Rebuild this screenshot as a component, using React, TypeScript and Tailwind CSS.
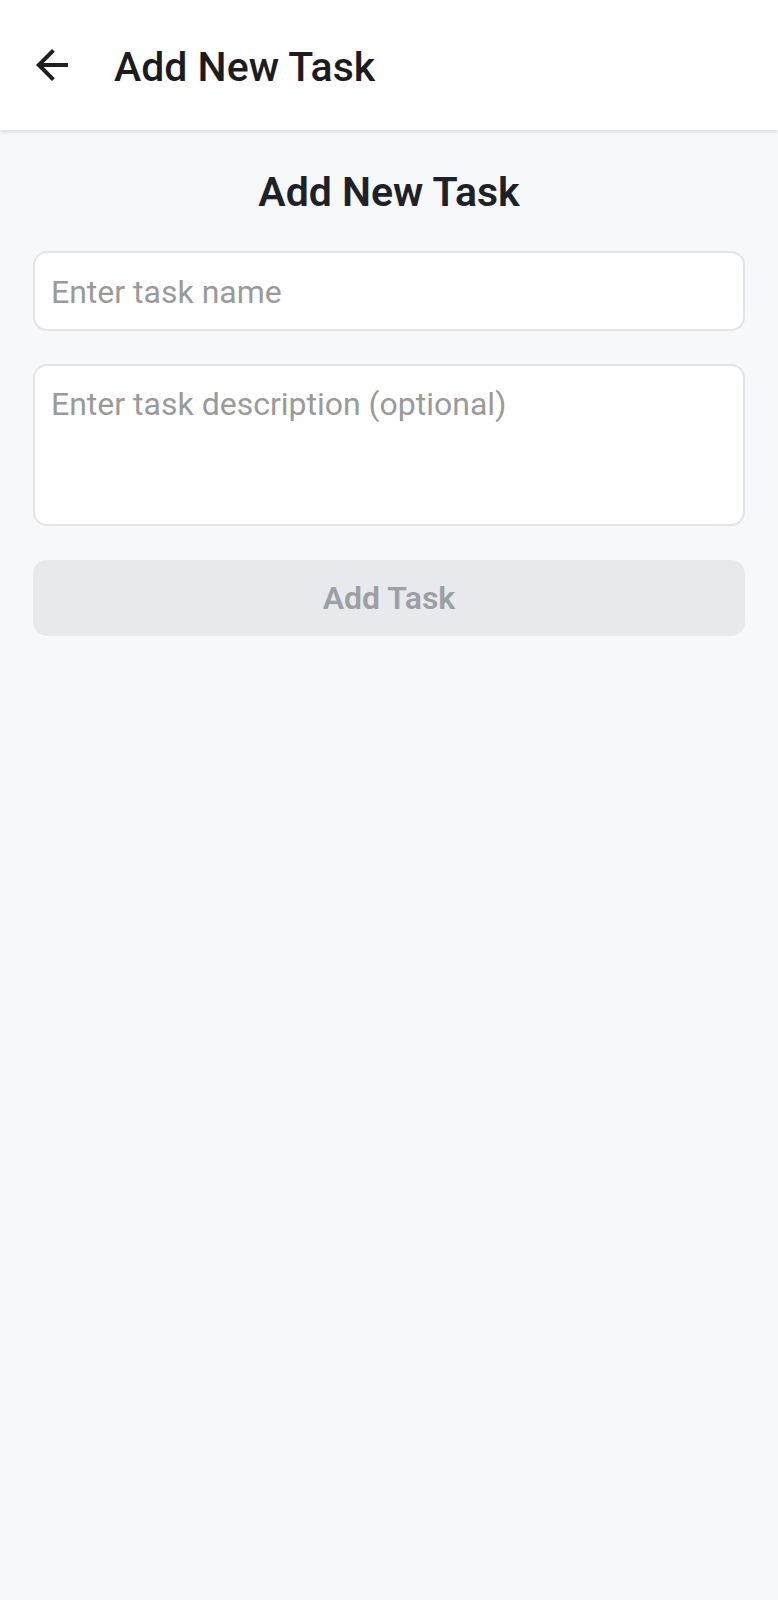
import React from "react";

export default function App() {
  return (
    <div
      className="w-[778px] h-[1600px] bg-[#f7f8fa] flex flex-col"
      style={{ fontFamily: "Roboto, 'Noto Sans', sans-serif" }}
    >
      <header className="h-[130px] bg-white flex items-center shadow-[0_2px_4px_rgba(0,0,0,0.12)] relative z-10">
        <div className="w-[48px] h-[48px] ml-[28px] flex items-center justify-center">
          <svg width="48" height="48" viewBox="0 0 24 24" fill="none">
            <path
              d="M20 11H7.83l5.59-5.59L12 4l-8 8 8 8 1.41-1.41L7.83 13H20v-2z"
              fill="#1f1f1f"
            />
          </svg>
        </div>
        <h1 className="ml-[38px] mt-[4px] text-[41px] font-medium text-[#1c1c1e] leading-none">
          Add New Task
        </h1>
      </header>
      <main className="flex flex-col px-[33px]">
        <h2 className="mt-[38px] text-center text-[41px] font-semibold text-[#1f2128] leading-[48px]">
          Add New Task
        </h2>
        <input
          placeholder="Enter task name"
          className="mt-[35px] h-[80px] w-full bg-white border-2 border-[#e3e5e8] rounded-[14px] px-[16px] pt-[2px] text-[32px] text-[#1f2128] placeholder:text-[#9a9a9a] outline-none"
        />
        <textarea
          placeholder="Enter task description (optional)"
          className="mt-[33px] h-[162px] w-full bg-white border-2 border-[#e3e5e8] rounded-[14px] px-[16px] pt-[17px] text-[32px] leading-[42px] text-[#1f2128] placeholder:text-[#9a9a9a] outline-none resize-none"
        />
        <button className="mt-[34px] h-[76px] w-full rounded-[14px] bg-[#e7e9ec] text-[32px] font-semibold text-[#9c9fa4]">
          Add Task
        </button>
      </main>
    </div>
  );
}
